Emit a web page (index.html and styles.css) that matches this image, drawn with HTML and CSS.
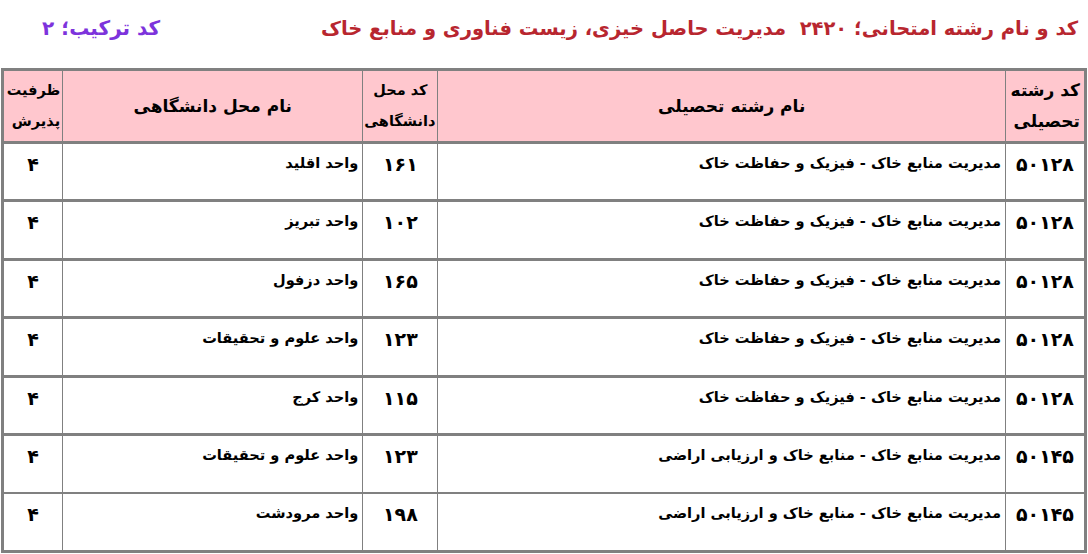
FILE: index.html
```html
<!DOCTYPE html>
<html lang="fa" dir="rtl">
<head>
<meta charset="utf-8">
<link rel="stylesheet" href="styles.css">
</head>
<body>
<div class="page">
  <div class="title-bar">
    <div class="title">کد و نام رشته امتحانی؛ ۲۴۲۰&nbsp; مدیریت حاصل خیزی، زیست فناوری و منابع خاک</div>
    <div class="combo">کد ترکیب؛ ۲</div>
  </div>
  <table class="grid">
    <colgroup>
      <col class="c-code">
      <col class="c-name">
      <col class="c-uni-code">
      <col class="c-uni-name">
      <col class="c-cap">
    </colgroup>
    <thead>
      <tr class="head">
        <th class="h-right">کد رشته<br>تحصیلی</th>
        <th class="h-center h-shift">نام رشته تحصیلی</th>
        <th class="h-center small">کد محل<br>دانشگاهی</th>
        <th class="h-center">نام محل دانشگاهی</th>
        <th class="h-right small">ظرفیت<br>پذیرش</th>
      </tr>
    </thead>
    <tbody>
      <tr><td class="num">۵۰۱۲۸</td><td class="txt">مدیریت منابع خاک - فیزیک و حفاظت خاک</td><td class="num">۱۶۱</td><td class="txt">واحد اقلید</td><td class="num">۴</td></tr>
      <tr><td class="num">۵۰۱۲۸</td><td class="txt">مدیریت منابع خاک - فیزیک و حفاظت خاک</td><td class="num">۱۰۲</td><td class="txt">واحد تبریز</td><td class="num">۴</td></tr>
      <tr><td class="num">۵۰۱۲۸</td><td class="txt">مدیریت منابع خاک - فیزیک و حفاظت خاک</td><td class="num">۱۶۵</td><td class="txt">واحد دزفول</td><td class="num">۴</td></tr>
      <tr><td class="num">۵۰۱۲۸</td><td class="txt">مدیریت منابع خاک - فیزیک و حفاظت خاک</td><td class="num">۱۲۳</td><td class="txt">واحد علوم و تحقیقات</td><td class="num">۴</td></tr>
      <tr><td class="num">۵۰۱۲۸</td><td class="txt">مدیریت منابع خاک - فیزیک و حفاظت خاک</td><td class="num">۱۱۵</td><td class="txt">واحد کرج</td><td class="num">۴</td></tr>
      <tr class="thin"><td class="num">۵۰۱۴۵</td><td class="txt">مدیریت منابع خاک - منابع خاک و ارزیابی اراضی</td><td class="num">۱۲۳</td><td class="txt">واحد علوم و تحقیقات</td><td class="num">۴</td></tr>
      <tr><td class="num">۵۰۱۴۵</td><td class="txt">مدیریت منابع خاک - منابع خاک و ارزیابی اراضی</td><td class="num">۱۹۸</td><td class="txt">واحد مرودشت</td><td class="num">۴</td></tr>
    </tbody>
  </table>
</div>
</body>
</html>
```

FILE: styles.css
```css
html, body {
  margin: 0;
  padding: 0;
  background: #ffffff;
}

.page {
  width: 1088px;
  font-family: "DejaVu Sans", sans-serif;
  font-weight: bold;
  color: #000;
}

.title-bar {
  display: flex;
  justify-content: space-between;
  align-items: center;
  height: 68px;
  padding: 0 10px 0 42px;
  box-sizing: border-box;
}

.title {
  color: #b8262f;
  font-size: 19.5px;
  white-space: nowrap;
  margin-bottom: 12px;
}

.combo {
  color: #7d33dc;
  font-size: 20px;
  white-space: nowrap;
  margin-bottom: 12px;
}

.grid {
  border-collapse: collapse;
  margin: 0 1px;
  width: 1086px;
  table-layout: fixed;
  border: 3px solid #808080;
}

.c-code { width: 80px; }
.c-name { width: 567px; }
.c-uni-code { width: 75px; }
.c-uni-name { width: 300px; }
.c-cap { width: 60px; }

.grid th,
.grid td {
  border-left: 1px solid #808080;
  border-right: 1px solid #808080;
  padding: 0 4px;
}

.head th {
  background: #ffc7ce;
  height: 70px;
  font-size: 17px;
  line-height: 31px;
  font-weight: bold;
  border-bottom: 3px solid #808080;
  vertical-align: middle;
  white-space: nowrap;
}

.head th.small {
  font-size: 14.5px;
  padding: 0 2px;
}

.head th.h-shift {
  padding-left: 24px;
}

.h-right { text-align: right; }
.h-center { text-align: center; }

.grid tbody td {
  height: 58.4px;
  border-bottom: 3px solid #808080;
  vertical-align: top;
  padding-top: 9px;
  box-sizing: border-box;
  font-size: 14.6px;
  line-height: 20px;
}

.grid tbody tr.thin td {
  border-bottom-width: 2px;
}

.grid tbody td.num {
  text-align: center;
  font-size: 19px;
  line-height: 22px;
  padding-top: 9px;
}

.grid td.txt {
  text-align: right;
}
```
